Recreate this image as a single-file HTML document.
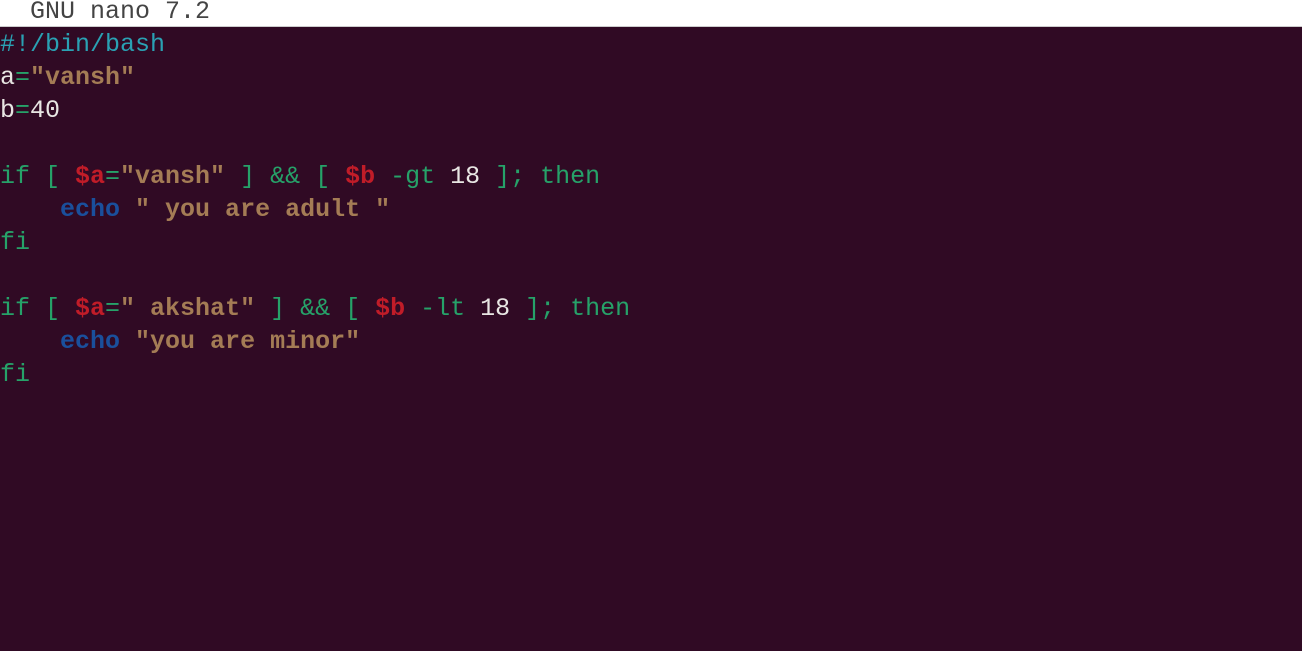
<html><head><style>
body{margin:0;width:1302px;height:651px;background:#300a24;overflow:hidden;font-family:"Liberation Mono",monospace;font-size:25px;}
.t{height:26px;background:#fff;color:#444;line-height:24px;white-space:pre;border-bottom:1px solid #ccc}
pre{margin:0;padding-top:1px;font:inherit;line-height:33px;color:#e8e6e3;}
.c{color:#2aa1b3}.s{color:#a47c55;font-weight:bold}.g{color:#26a269}.r{color:#c01c28;font-weight:bold}.b{color:#1a4f9c;font-weight:bold}
</style></head><body>
<div class="t">  GNU nano 7.2</div>
<pre><span class="c">#!/bin/bash</span>
a<span class="g">=</span><span class="s">"vansh"</span>
b<span class="g">=</span>40

<span class="g">if [ </span><span class="r">$a</span><span class="g">=</span><span class="s">"vansh"</span><span class="g"> ] &amp;&amp; [ </span><span class="r">$b</span><span class="g"> -gt </span>18<span class="g"> ]; then</span>
    <span class="b">echo</span> <span class="s">" you are adult "</span>
<span class="g">fi</span>

<span class="g">if [ </span><span class="r">$a</span><span class="g">=</span><span class="s">" akshat"</span><span class="g"> ] &amp;&amp; [ </span><span class="r">$b</span><span class="g"> -lt </span>18<span class="g"> ]; then</span>
    <span class="b">echo</span> <span class="s">"you are minor"</span>
<span class="g">fi</span></pre>
</body></html>
